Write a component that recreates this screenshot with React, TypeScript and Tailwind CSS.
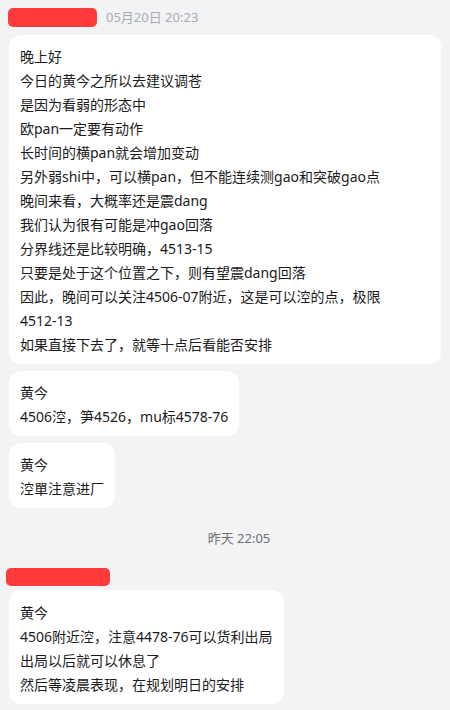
const bubbles: string[][] = [
  [
    '晚上好',
    '今日的黄今之所以去建议调苍',
    '是因为看弱的形态中',
    '欧pan一定要有动作',
    '长时间的横pan就会增加变动',
    '另外弱shi中，可以横pan，但不能连续测gao和突破gao点',
    '晚间来看，大概率还是震dang',
    '我们认为很有可能是冲gao回落',
    '分界线还是比较明确，4513-15',
    '只要是处于这个位置之下，则有望震dang回落',
    '因此，晚间可以关注4506-07附近，这是可以涳的点，极限',
    '4512-13',
    '如果直接下去了，就等十点后看能否安排',
  ],
  ['黄今', '4506涳，笋4526，mu标4578-76'],
  ['黄今', '涳單注意进厂'],
];

const lastBubble = ['黄今', '4506附近涳，注意4478-76可以货利出局', '出局以后就可以休息了', '然后等凌晨表现，在规划明日的安排'];

function Bubble({ lines, top = 'pt-[10px]', wide = false }: { lines: string[]; top?: string; wide?: boolean }) {
  return (
    <div
      className={`bg-white rounded-[12px] px-[11px] ${top} pb-[7px] ${wide ? 'w-full' : 'max-w-full'} text-[14px] leading-[24px] text-[#1b1b1b] whitespace-nowrap`}
    >
      {lines.map((l, i) => (
        <div key={i}>{l}</div>
      ))}
    </div>
  );
}

export default function App() {
  return (
    <div
      className="h-[710px] w-[450px] overflow-hidden bg-[#f2f3f5]"
      style={{ fontFamily: '"Noto Sans", "Noto Sans CJK SC", sans-serif' }}
    >
      {/* first sender */}
      <div className="flex items-center pt-[8px] pl-[8px]">
        <div className="w-[89px] h-[19px] rounded-[5px] bg-[#fe3a3a]" />
        <span className="ml-[9px] text-[13px] text-[#a9abb0]">05月20日 20:23</span>
      </div>

      <div className="flex flex-col items-start gap-[7px] px-[9px] mt-[7px]">
        {bubbles.map((b, i) => (
          <Bubble key={i} lines={b} wide={i === 0} />
        ))}
      </div>

      {/* time divider */}
      <div className="flex justify-center pl-[28px] mt-[20px] text-[13px] leading-[20px] text-[#6e6f73]">
        昨天 22:05
      </div>

      <div className="pl-[6px] mt-[20px]">
        <div className="w-[104px] h-[18px] rounded-[5px] bg-[#fe3a3a]" />
      </div>

      <div className="flex flex-col items-start px-[9px] mt-[4px]">
        <Bubble lines={lastBubble} top="pt-[11px]" />
      </div>
    </div>
  );
}
